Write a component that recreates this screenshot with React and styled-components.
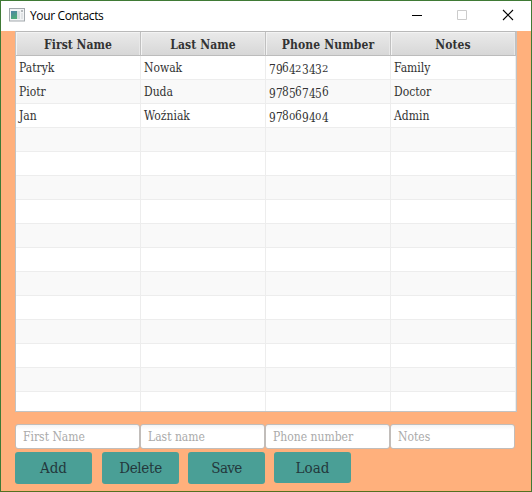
import React from 'react';
import styled, { createGlobalStyle } from 'styled-components';

const GlobalStyle = createGlobalStyle`
  *, *::before, *::after { box-sizing: border-box; }
  body { margin: 0; overflow: hidden; }
`;

const serif = '"DejaVu Serif Condensed", "DejaVu Serif", "Liberation Serif", serif';

const Window = styled.div`
  width: 532px;
  height: 492px;
  display: flex;
  flex-direction: column;
  border: 1px solid #3f7a35;
  border-bottom-color: #557020;
  background: #ffb07c;
  color: #333;
  font-family: ${serif};
  font-stretch: condensed;
`;

const TitleBar = styled.header`
  flex: none;
  height: 30px;
  display: flex;
  align-items: center;
  padding-left: 8px;
  background: #fff;
`;

const AppIcon = styled.svg`
  display: block;
  width: 16px;
  height: 14px;
  margin-top: -2px;
`;

const Title = styled.h1`
  flex: 1;
  margin: 0 0 0 5px;
  color: #000;
  font: 400 12px/18px "Open Sans", "Noto Sans", sans-serif;
  letter-spacing: -0.36px;
`;

const WindowButton = styled.button`
  width: 46px;
  height: 30px;
  padding: 0;
  border: 0;
  background: none;
  svg { display: block; width: 46px; height: 30px; }
`;

const Content = styled.main`
  flex: 1;
  display: flex;
  flex-direction: column;
  padding-left: 14px;
`;

const Table = styled.div`
  flex: none;
  width: 502px;
  height: 381px;
  overflow: hidden;
  border: 1px solid #c3c3c3;
  border-top-color: #b9b9b9;
  background: #fff;
`;

const columns = 'grid-template-columns: repeat(4, 125px);';

const HeaderRow = styled.div`
  display: grid;
  ${columns}
  grid-template-rows: 24px;
  height: 24px;
`;

const HeaderCell = styled.div`
  height: 24px;
  padding-top: 1px;
  border-right: 1px solid #c0c0c0;
  border-bottom: 1px solid #bcbcbc;
  box-shadow: inset 1px 1px 0 #f3f3f3, inset -1px 0 0 #e8e8e8;
  background: linear-gradient(#eaeaea, #d7d7d7);
  font-size: 12px;
  font-weight: 700;
  line-height: 24px;
  text-align: center;
  letter-spacing: ${({ $spacing = 0 }) => $spacing}px;
`;

const Row = styled.div`
  display: grid;
  ${columns}
  height: 24px;
  background: ${({ $odd }) => ($odd ? '#f9f9f9' : '#fff')};
`;

const Cell = styled.div`
  height: 24px;
  padding: 1px 0 0 3px;
  border-right: 1px solid #ededed;
  border-bottom: 1px solid #ededed;
  font-size: 12px;
  line-height: 22px;
  white-space: nowrap;
`;

const digitDrop = { small: 0, tall: 0, low: 2 };

const PhoneNumber = styled.span`
  display: flex;
  height: 22px;
`;

const Digit = styled.span`
  width: 6.6px;
  font-size: ${({ $shape }) => ($shape === 'small' ? 10 : 12)}px;
  line-height: ${({ $shape }) => ($shape === 'small' ? 24 : 22)}px;
  text-align: center;
  transform: translateY(${({ $shape }) => digitDrop[$shape]}px)
    scaleX(${({ $shape }) => ($shape === 'small' ? 1.12 : 0.98)});
`;

const Fields = styled.div`
  display: grid;
  ${columns}
  margin-top: 12px;
`;

const Field = styled.input`
  width: 125px;
  height: 25px;
  padding: 0 7px;
  border: 1px solid #c1bdba;
  border-radius: 3px;
  outline: 0;
  background: linear-gradient(#f4f4f4, #fff 5px);
  color: #333;
  font-family: ${serif};
  font-stretch: condensed;
  font-size: 12px;
  &::placeholder { color: #aaa; opacity: 1; }
`;

const Actions = styled.div`
  display: flex;
  margin-top: 3px;
`;

const ActionButton = styled.button`
  width: 77px;
  height: ${({ $height = 32 }) => $height}px;
  margin-right: ${({ $gap = 9 }) => $gap}px;
  padding: 0;
  border: 0;
  border-radius: 3px;
  background: #4a9f96;
  color: #24383c;
  font-family: ${serif};
  font-stretch: condensed;
  font-size: 15px;
  letter-spacing: ${({ $spacing = 0 }) => $spacing}px;
`;

const contacts = [
  ['Patryk', 'Nowak', '796423432', 'Family'],
  ['Piotr', 'Duda', '978567456', 'Doctor'],
  ['Jan', 'Woźniak', '978069404', 'Admin'],
];

const rows = Array.from({ length: 15 }, (_, i) => contacts[i] || ['', '', '', '']);

function digitShape(d) {
  if ('012'.includes(d)) return 'small';
  return '68'.includes(d) ? 'tall' : 'low';
}

function OldStyleNumber({ value }) {
  return (
    <PhoneNumber>
      {[...value].map((d, i) => (
        <Digit key={i} $shape={digitShape(d)}>{d}</Digit>
      ))}
    </PhoneNumber>
  );
}

export default function App() {
  return (
    <>
      <GlobalStyle />
      <Window>
        <TitleBar>
          <AppIcon viewBox="0 0 16 14">
            <defs>
              <linearGradient id="pane" x2="0.4" y2="1">
                <stop stopColor="#4d82a8" />
                <stop offset="1" stopColor="#4cab78" />
              </linearGradient>
            </defs>
            <rect x=".5" y=".5" width="15" height="12.5" fill="#f2f4f5" stroke="#a3a9ad" />
            <rect x="2" y="3" width="6" height="8" fill="url(#pane)" />
            <rect x="8" y="3" width="3" height="8" fill="#d4dddf" />
            <rect x="12" y="2" width="2" height="2" fill="#b5babd" />
            <rect x="12" y="5" width="2" height="6" fill="#e0e3e5" />
          </AppIcon>
          <Title>Your Contacts</Title>
          <WindowButton aria-label="Minimize">
            <svg viewBox="0 0 46 30"><path d="M19 14.5h10" stroke="#000" /></svg>
          </WindowButton>
          <WindowButton aria-label="Maximize" disabled>
            <svg viewBox="0 0 46 30"><path d="M18.5 9.5h9v9h-9z" fill="none" stroke="#ccc" /></svg>
          </WindowButton>
          <WindowButton aria-label="Close">
            <svg viewBox="0 0 46 30"><path d="M18 9l10 10M28 9L18 19" stroke="#000" strokeWidth="1.1" /></svg>
          </WindowButton>
        </TitleBar>
        <Content>
          <Table>
            <HeaderRow>
              <HeaderCell $spacing={0.05}>First Name</HeaderCell>
              <HeaderCell $spacing={0.1}>Last Name</HeaderCell>
              <HeaderCell $spacing={0.15}>Phone Number</HeaderCell>
              <HeaderCell $spacing={0.1}>Notes</HeaderCell>
            </HeaderRow>
            {rows.map(([first, last, phone, notes], i) => (
              <Row key={i} $odd={i % 2 === 1}>
                <Cell>{first}</Cell>
                <Cell>{last}</Cell>
                <Cell><OldStyleNumber value={phone} /></Cell>
                <Cell>{notes}</Cell>
              </Row>
            ))}
          </Table>
          <Fields>
            <Field placeholder="First Name" />
            <Field placeholder="Last name" />
            <Field placeholder="Phone number" />
            <Field placeholder="Notes" />
          </Fields>
          <Actions>
            <ActionButton $gap={10}>Add</ActionButton>
            <ActionButton $spacing={-0.3}>Delete</ActionButton>
            <ActionButton $spacing={-0.6}>Save</ActionButton>
            <ActionButton $height={31}>Load</ActionButton>
          </Actions>
        </Content>
      </Window>
    </>
  );
}
